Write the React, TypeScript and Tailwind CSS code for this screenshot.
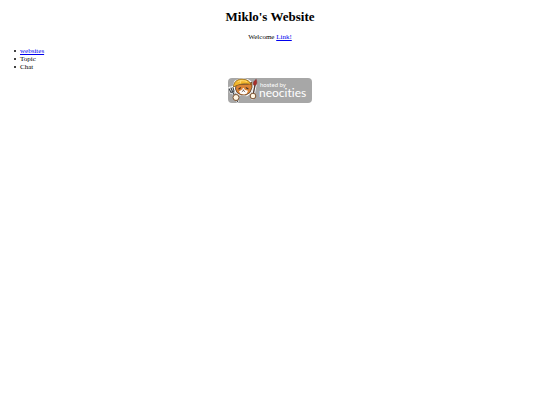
import React from 'react';

const NeocitiesBadge: React.FC = () => {
  return (
    <svg viewBox="0 0 84 25" className="block w-[84px]" role="img" aria-label="Hosted by Neocities">
      <rect width="84" height="25" rx="4" fill="#a7a7a7" />

      {/* Fork */}
      <g fill="none" strokeLinecap="round" strokeLinejoin="round">
        <path d="M1.5 10 3 14.5 6 13 5 9M3 9.5l1.5 4L9.5 23.5" stroke="#fff" strokeWidth="2.4" />
        <path d="M1.2 11 3 14.5 6.2 13 5 9.5M3 10l1.5 3.5L9.5 23.5" stroke="#454b50" strokeWidth="1.3" />
      </g>

      {/* Brush */}
      <path d="M24.5 20 27 7" stroke="#fff" strokeWidth="3.2" strokeLinecap="round" />
      <path d="M24.5 20 27 7" stroke="#554038" strokeWidth="1.4" strokeLinecap="round" />
      <path d="M25.6 7C24.8 4 26.2 3 28.2 1.2 29.2 4 29 6 27.7 7.3Z" fill="#a92f2c" stroke="#7c2424" strokeWidth=".4" />

      {/* Cat */}
      <path
        d="M5.5 7 7 3.5 11 1.5 15 1 20 2 24 4.5 24.5 10 22.5 15 19 17.5 12 17 8 14.5 6.5 10Z"
        fill="#fff"
        stroke="#fff"
        strokeWidth="1.4"
        strokeLinejoin="round"
      />
      <path d="M8 6.5 7.5 11 9 14.5 13 17 18 17 22 14.5 24 9.5 24 4 20 6Z" fill="#dc8435" stroke="#4a3526" strokeWidth=".8" />
      <path d="M11 13.2 13.5 12 15.3 9.8 17.2 12 20 12.8 18.8 15.6 16.2 16.4 12.4 15.8Z" fill="#fff" />
      <path d="M5.5 7.5C6.5 3 10 1 14.5 1.1 19 1.2 22 3.3 23.2 6.8 19 5 12 5.5 5.5 9Z" fill="#f3b72d" stroke="#735018" strokeWidth=".7" />
      <path d="M9.5 3.8C12 2.4 16 2.2 19 3.7M13 1.8 12.2 5.5" stroke="#ffe281" strokeWidth=".8" fill="none" />
      <path d="M10.8 11 12.5 9.8M18.2 9.8l1.8 1" stroke="#3e3029" strokeWidth="1.1" strokeLinecap="round" />
      <path d="M14.8 12h1.2M15.4 12.5l-1.4 1.4M15.4 12.5l1.5 1.3" stroke="#6d4634" strokeWidth=".7" strokeLinecap="round" />

      {/* Paws */}
      <circle cx="8" cy="19.5" r="3" fill="#fff5e2" stroke="#7a5230" strokeWidth="1" />
      <circle cx="25" cy="18" r="2.8" fill="#fff5e2" stroke="#7a5230" strokeWidth="1" />

      <text x="32" y="9" fontSize="6" fill="#fff" fontFamily="Lato, sans-serif">
        hosted by
      </text>
      <text x="31" y="19" fontSize="12" fill="#fff" fontFamily="Lato, sans-serif" className="[font-variant-ligatures:none]">
        neocities
      </text>
    </svg>
  );
};

export default function App() {
  return (
    <main className="px-2 py-[9px] font-['Liberation_Serif',serif] text-[7px] leading-2 text-black">
      <h1 className="text-center text-[13px] leading-4 font-bold">Miklo's Website</h1>
      <p className="mt-2 text-center">
        Welcome{' '}
        <a href="#" className="text-[#0000ee] underline">
          Link!
        </a>
      </p>
      <ul className="mt-1.5 pl-1.5 [&>li]:flex [&>li]:items-center [&>li]:gap-1 [&>li]:before:size-0.5 [&>li]:before:rounded-full [&>li]:before:bg-black">
        <li>
          <a href="#" className="text-[#0000ee] underline">
            websites
          </a>
        </li>
        <li>Topic</li>
        <li>Chat</li>
      </ul>
      <div className="mt-[7px] flex justify-center">
        <a href="#">
          <NeocitiesBadge />
        </a>
      </div>
    </main>
  );
}
